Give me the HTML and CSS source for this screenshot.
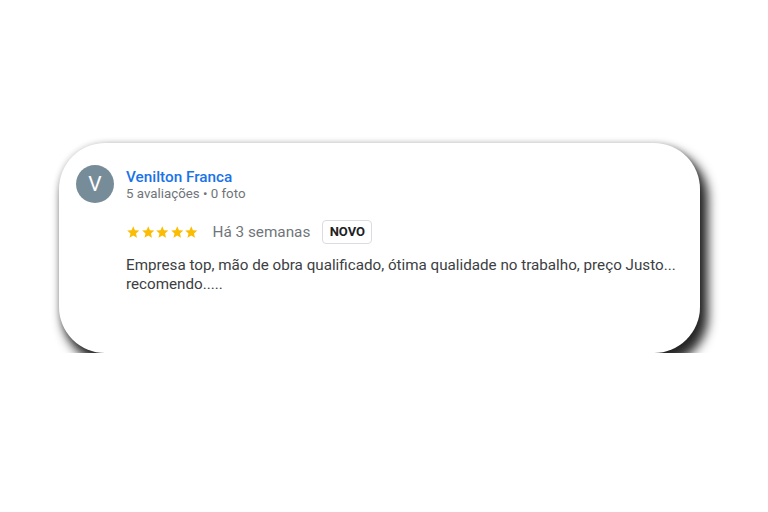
FILE: index.html
```html
<!DOCTYPE html>
<html lang="pt-BR">
<head>
    <meta charset="UTF-8">
    <title>Avaliação - Venilton Franca</title>
    <link rel="stylesheet" href="styles.css">
</head>
<body>

    <div class="page">
        <div class="review-card">
            <div class="avatar">V</div>

            <div class="author">
                <a class="author-name" href="#">Venilton Franca</a>
                <div class="author-meta">5 avaliações • 0 foto</div>
            </div>

            <div class="review">
                <div class="review-head">
                    <div class="stars">
                        <svg viewBox="0 0 24 24"><path d="M12 17.27L18.18 21l-1.64-7.03L22 9.24l-7.19-.61L12 2 9.19 8.63 2 9.24l5.46 4.73L5.82 21z"/></svg>
                        <svg viewBox="0 0 24 24"><path d="M12 17.27L18.18 21l-1.64-7.03L22 9.24l-7.19-.61L12 2 9.19 8.63 2 9.24l5.46 4.73L5.82 21z"/></svg>
                        <svg viewBox="0 0 24 24"><path d="M12 17.27L18.18 21l-1.64-7.03L22 9.24l-7.19-.61L12 2 9.19 8.63 2 9.24l5.46 4.73L5.82 21z"/></svg>
                        <svg viewBox="0 0 24 24"><path d="M12 17.27L18.18 21l-1.64-7.03L22 9.24l-7.19-.61L12 2 9.19 8.63 2 9.24l5.46 4.73L5.82 21z"/></svg>
                        <svg viewBox="0 0 24 24"><path d="M12 17.27L18.18 21l-1.64-7.03L22 9.24l-7.19-.61L12 2 9.19 8.63 2 9.24l5.46 4.73L5.82 21z"/></svg>
                    </div>
                    <span class="review-date">Há 3 semanas</span>
                    <span class="badge">NOVO</span>
                </div>

                <p class="review-text">Empresa top, mão de obra qualificado, ótima qualidade no trabalho, preço Justo... recomendo.....</p>
            </div>
        </div>
    </div>

</body>
</html>
```

FILE: styles.css
```css
body {
    margin: 0;
    background-color: #fff;
    font-family: Roboto, "Liberation Sans", sans-serif;
    color: #3c4043;
}

.page {
    padding: 143px 0 0 59px;
}

/* Review card */
.review-card {
    box-sizing: border-box;
    width: 641px;
    height: 210px;
    padding: 22px 14px 0 17px;
    background: #fff;
    border-radius: 46px;
    box-shadow: 6px 9px 11px 2px rgba(0, 0, 0, 0.85), 0 0 6px rgba(0, 0, 0, 0.18);
    display: grid;
    grid-template-columns: 38px 1fr;
    align-content: start;
    column-gap: 12px;
}

.avatar {
    width: 38px;
    height: 38px;
    border-radius: 50%;
    background-color: #778c99;
    color: #fff;
    font-size: 21px;
    line-height: 38px;
    text-align: center;
}

.author {
    padding-top: 3px;
}

.author-name {
    display: block;
    font-size: 15.3px;
    line-height: 18px;
    font-weight: 500;
    color: #1a73e8;
    text-decoration: none;
}

.author-meta {
    font-size: 13.3px;
    line-height: 16px;
    color: #70757a;
}

.review {
    grid-column: 2;
}

.review-head {
    display: flex;
    align-items: center;
    height: 24px;
    margin-top: 17px;
}

.stars {
    display: flex;
    fill: #fbbc04;
}

.stars svg {
    width: 14.5px;
    height: 14.5px;
}

.review-date {
    margin-left: 14px;
    font-size: 15.3px;
    color: #70757a;
}

.badge {
    box-sizing: border-box;
    margin-left: 12px;
    width: 50px;
    height: 24px;
    line-height: 22px;
    border: 1px solid #dadce0;
    border-radius: 4px;
    text-align: center;
    font-size: 13px;
    font-weight: 700;
    color: #202124;
}

.review-text {
    margin: 12px 0 0;
    font-size: 15.2px;
    line-height: 19px;
    color: #3c4043;
}
```
